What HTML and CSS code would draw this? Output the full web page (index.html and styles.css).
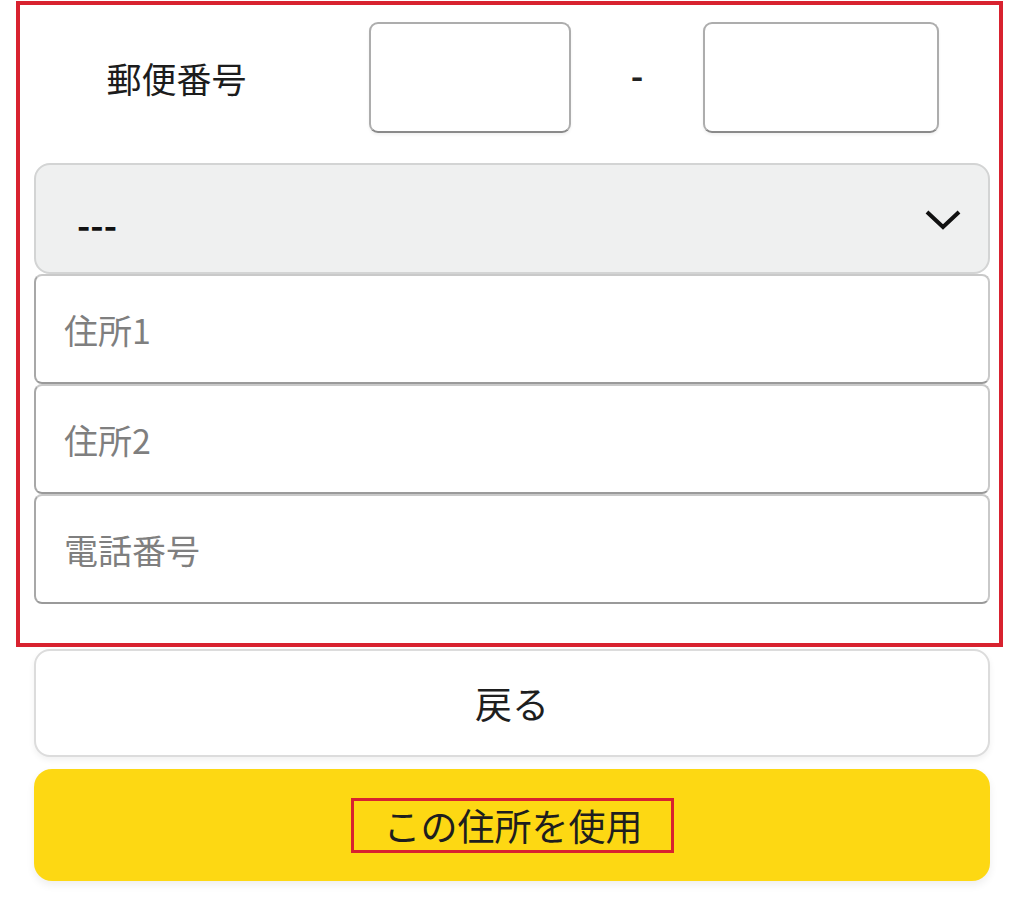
FILE: index.html
```html
<!DOCTYPE html>
<html lang="ja">
<head>
<meta charset="utf-8">
<link rel="stylesheet" href="styles.css">
</head>
<body>
<div class="page">
  <form class="highlight">
    <div class="postal-row">
      <label class="postal-label">郵便番号</label>
      <input class="postal-input first" type="text">
      <span class="postal-dash">-</span>
      <input class="postal-input second" type="text">
    </div>
    <div class="select-wrap">
      <select class="pref-select"><option>---</option></select>
      <svg class="chevron" width="38" height="24" viewBox="0 0 38 24"><polyline points="3,4 19,19 35,4" fill="none" stroke="#111" stroke-width="4"/></svg>
    </div>
    <div class="field-stack">
      <input class="field" type="text" placeholder="住所1">
      <input class="field" type="text" placeholder="住所2">
      <input class="field" type="text" placeholder="電話番号">
    </div>
  </form>
  <div class="actions">
    <button class="btn btn-back" type="button">戻る</button>
    <button class="btn btn-use" type="button"><span class="marked">この住所を使用</span></button>
  </div>
</div>
</body>
</html>
```
FILE: styles.css
```css
* { box-sizing: border-box; }
html, body { margin: 0; padding: 0; background: #fff; }
body {
  font-family: "Noto Sans CJK JP", "Noto Sans", sans-serif;
  color: #222;
  width: 1024px;
  height: 924px;
  overflow: hidden;
}
.page { padding-top: 1px; }
.highlight {
  margin: 0 0 0 16px;
  width: 987px;
  border: 4px solid #d8222f;
  padding: 17px 9px 39px 14px;
  display: flex;
  flex-direction: column;
}
.postal-row {
  display: flex;
  align-items: center;
  height: 111px;
}
.postal-label {
  width: 335px;
  text-align: center;
  font-size: 35px;
  color: #1c1c1c;
  padding-right: 50px;
  padding-top: 0;
}
.postal-input {
  height: 111px;
  border: 2px solid #adadad;
  border-bottom-color: #8a8a8a;
  border-radius: 9px;
  background: #fff;
  box-shadow: 0 2px 3px rgba(0,0,0,0.06);
  outline: none;
}
.postal-input.first { width: 202px; }
.postal-input.second { width: 236px; }
.postal-dash {
  width: 132px;
  text-align: center;
  font-size: 34px;
  font-weight: 700;
  color: #222;
  padding-bottom: 6px;
}
.select-wrap {
  position: relative;
  margin-top: 30px;
  height: 111px;
}
.pref-select {
  -webkit-appearance: none;
  appearance: none;
  width: 956px;
  height: 111px;
  background: #eff0f0;
  border: 2px solid #d3d4d4;
  border-radius: 16px;
  font-family: "Noto Sans CJK JP", "Noto Sans", sans-serif;
  font-size: 36px;
  font-weight: 700;
  color: #111;
  padding: 8px 0 0 41px;
  outline: none;
}
.chevron {
  position: absolute;
  right: 28px;
  top: 45px;
  pointer-events: none;
}
.field-stack {
  display: flex;
  flex-direction: column;
}
.field {
  width: 956px;
  height: 110px;
  border: 2px solid #c9c9c9;
  border-left-color: #a8a8a8;
  border-bottom-color: #9a9a9a;
  border-radius: 8px;
  background: #fff;
  font-family: "Noto Sans CJK JP", "Noto Sans", sans-serif;
  font-size: 34px;
  padding-left: 28px;
  outline: none;
}
.field::placeholder { color: #7f7f7f; }
.actions {
  margin: 2px 34px 0 34px;
  display: flex;
  flex-direction: column;
  gap: 12px;
}
.btn {
  width: 956px;
  font-family: "Noto Sans CJK JP", "Noto Sans", sans-serif;
  font-size: 37px;
  color: #1e1e1e;
  display: flex;
  align-items: center;
  justify-content: center;
  cursor: pointer;
}
.btn-back {
  height: 108px;
  background: #fff;
  border: 2px solid #dcdcdc;
  border-radius: 16px;
  box-shadow: 0 3px 6px rgba(0,0,0,0.06);
}
.btn-use {
  height: 112px;
  background: #fdd813;
  border: none;
  border-radius: 18px;
  box-shadow: 0 4px 8px rgba(0,0,0,0.07);
}
.marked {
  border: 3px solid #d8222f;
  padding: 0 28px 0 30px;
  line-height: 49px;
  display: inline-block;
}
```
